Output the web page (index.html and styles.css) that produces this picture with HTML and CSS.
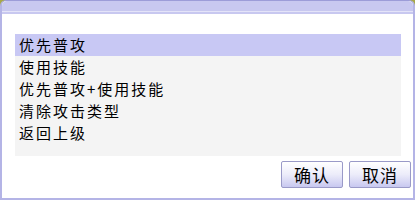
FILE: index.html
```html
<!DOCTYPE html>
<html lang="zh">
<head>
<meta charset="UTF-8">
<title>攻击类型</title>
<link rel="stylesheet" href="styles.css">
</head>
<body>
<div class="dialog">
<div class="titlebar"></div>
<div class="content">
<ul class="list">
<li class="selected">优先普攻</li>
<li>使用技能</li>
<li>优先普攻+使用技能</li>
<li>清除攻击类型</li>
<li>返回上级</li>
</ul>
<div class="buttons">
<button>确认</button>
<button>取消</button>
</div>
</div>
</div>
</body>
</html>
```

FILE: styles.css
```css
body {
margin: 0;
background-color: #a8a848;
font-family: "Noto Sans CJK SC", "DejaVu Sans", sans-serif;
}
.dialog {
width: 415px;
height: 200px;
box-sizing: border-box;
background-color: #fff;
border: 2px solid #b4b4e6;
border-top: 1px solid #9c9cd8;
border-radius: 6px 6px 0 0;
display: flex;
flex-direction: column;
}
.titlebar {
height: 10px;
background-color: #c8c8f0;
border-bottom: 1px solid #e4e4f8;
box-shadow: 0 2px 0 #c8c8f0;
border-radius: 5px 5px 0 0;
}
.content {
flex: 1;
padding: 22px 2px 0 13px;
}
.list {
list-style: none;
margin: 0 10px 0 0;
padding: 0;
background-color: #f4f4f4;
height: 122px;
}
.list li {
height: 22px;
line-height: 22px;
font-size: 15px;
letter-spacing: 2px;
padding-left: 4px;
color: #000;
}
.list .selected {
background-color: #c8c8f4;
}
.buttons {
display: flex;
justify-content: flex-end;
gap: 6px;
margin-top: 5px;
}
button {
width: 62px;
height: 27px;
font-family: "Noto Sans CJK SC", sans-serif;
font-size: 17px;
letter-spacing: 1px;
line-height: 1;
padding: 0;
border: 1px solid #9a9ac8;
border-radius: 2px;
background: linear-gradient(#ffffff, #ececfa 50%, #c8c8f0);
color: #000;
}
```
